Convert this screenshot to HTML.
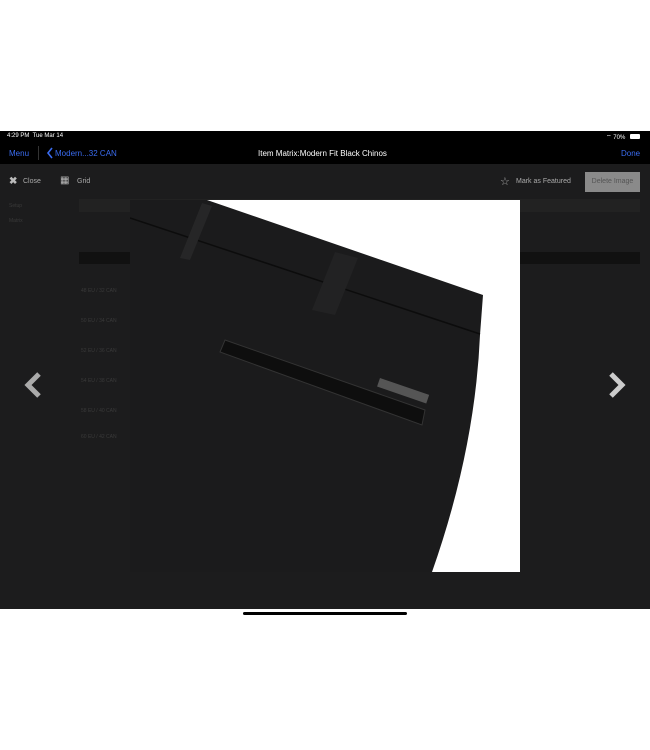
<!DOCTYPE html>
<html><head><style>
body{margin:0;width:650px;height:750px;background:#fff;position:relative;font-family:"Liberation Sans",sans-serif;overflow:hidden}
.scr{position:absolute;left:0;top:131px;width:650px;height:478px;background:#1c1c1d}
.status{position:absolute;left:0;top:0;width:650px;height:11px;background:#000;color:#fff;font-size:6px}
.nav{position:absolute;left:0;top:11px;width:650px;height:22px;background:#000;color:#fff;font-size:8px}
.blue{color:#3a6cf0}
.t{position:absolute;white-space:nowrap}
.dim{color:#3a3a3a;font-size:5px}
</style></head><body>
<div class="scr">
<div class="status"><span class="t" style="left:7px;top:2px">4:29 PM&nbsp; Tue Mar 14</span><span class="t" style="left:606px;top:2px">⌔ 70%</span><span style="position:absolute;left:630px;top:3px;width:10px;height:5px;background:#fff;border-radius:1px"></span></div>
<div class="nav">
<span class="t blue" style="left:9px;top:7px">Menu</span>
<span style="position:absolute;left:38px;top:4px;width:1px;height:14px;background:#333"></span>
<svg style="position:absolute;left:46px;top:5px" width="8" height="12"><path d="M6 1 L2 6 L6 11" stroke="#3a6cf0" stroke-width="1.6" fill="none"/></svg>
<span class="t blue" style="left:55px;top:7px">Modern...32 CAN</span>
<span class="t" style="left:258px;top:7px">Item Matrix:Modern Fit Black Chinos</span>
<span class="t blue" style="left:621px;top:7px">Done</span>
</div>
<span class="t" style="left:9px;top:45px;color:#bbb;font-size:10px;font-weight:bold">✖</span>
<span class="t" style="left:23px;top:47px;color:#aaa;font-size:7px">Close</span>
<span class="t" style="left:60px;top:44px;color:#bbb;font-size:10px">▦</span>
<span class="t" style="left:77px;top:47px;color:#aaa;font-size:7px">Grid</span>
<span class="t" style="left:500px;top:44px;color:#aaa;font-size:11px">☆</span>
<span class="t" style="left:516px;top:47px;color:#aaa;font-size:7px">Mark as Featured</span>
<div style="position:absolute;left:585px;top:41px;width:55px;height:20px;background:#8a8a8a;color:#555;font-size:7px;line-height:20px;text-align:center">Delete Image</div>
<span class="t dim" style="left:9px;top:72px">Setup</span><span class="t dim" style="left:9px;top:87px">Matrix</span>
<div style="position:absolute;left:79px;top:68px;width:561px;height:13px;background:#222"></div>
<div style="position:absolute;left:79px;top:121px;width:561px;height:12px;background:#111"></div>
<span class="t dim" style="left:81px;top:157px">48 EU / 32 CAN</span>
<span class="t dim" style="left:81px;top:187px">50 EU / 34 CAN</span>
<span class="t dim" style="left:81px;top:217px">52 EU / 36 CAN</span>
<span class="t dim" style="left:81px;top:247px">54 EU / 38 CAN</span>
<span class="t dim" style="left:81px;top:277px">58 EU / 40 CAN</span>
<span class="t dim" style="left:81px;top:303px">60 EU / 42 CAN</span>
<svg style="position:absolute;left:22px;top:240px" width="22" height="30"><path d="M17 3 L6 14 L17 25" stroke="#aaa" stroke-width="5" fill="none"/></svg>
<svg style="position:absolute;left:606px;top:240px" width="22" height="30"><path d="M5 3 L16 14 L5 25" stroke="#ccc" stroke-width="5" fill="none"/></svg>
<svg style="position:absolute;left:130px;top:69px" width="390" height="372">
<rect width="390" height="372" fill="#fff"/>
<path d="M0 0 L77 0 L353 95 L350 135 Q345 250 302 372 L0 372 Z" fill="#1b1b1c"/>
<path d="M0 18 L350 134" stroke="#0c0c0c" stroke-width="1.5"/>
<path d="M72 3 L82 6 L60 60 L50 58 Z" fill="#262627"/>
<path d="M205 52 L228 58 L205 115 L182 110 Z" fill="#222223"/>
<path d="M95 140 L295 210 L292 225 L90 152 Z" fill="#0e0e0e" stroke="#333" stroke-width="1"/>
<rect x="250" y="178" width="52" height="9" fill="#555" transform="rotate(19 250 178)"/>
</svg>
</div>
<div style="position:absolute;left:243px;top:612px;width:164px;height:3px;background:#000;border-radius:2px"></div>
</body></html>
